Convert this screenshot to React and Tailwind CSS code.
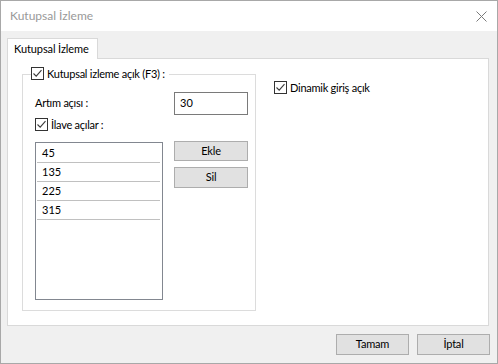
import React from "react";

const font = { fontFamily: '"Segoe UI", Lato, "Noto Sans", sans-serif' };

function Check({ label }) {
  return (
    <div className="flex items-center h-[13px]">
      <div className="w-[13px] h-[13px] border border-[#333333] bg-white flex items-center justify-center shrink-0">
        <svg width="11" height="11" viewBox="0 0 11 11">
          <path d="M1.5 5.5 L4.2 8.2 L9.5 2.2" fill="none" stroke="#3c3c3c" strokeWidth="1.1" />
        </svg>
      </div>
      <span className="ml-[3px] text-[11px] tracking-[-0.25px] leading-[13px] text-black whitespace-nowrap">{label}</span>
    </div>
  );
}

function Btn({ children, w = "w-[74px]", h = "h-[20px]" }) {
  return (
    <div className={`${w} ${h} bg-[#e1e1e1] border border-[#adadad] flex items-center justify-center text-[11px] tracking-[-0.2px] text-black`}>
      {children}
    </div>
  );
}

export default function App() {
  const rows = ["45", "135", "225", "315"];
  return (
    <div style={font} className="w-[498px] h-[364px] border border-[#a8a8a8] bg-[#f0f0f0] flex flex-col overflow-hidden">
      <div className="h-[30px] bg-white flex items-center justify-between pl-[9px] pr-[10px] shrink-0">
        <span className="text-[12px] text-[#999999] whitespace-nowrap">Kutupsal İzleme</span>
        <svg width="11" height="11" viewBox="0 0 11 11">
          <path d="M0.5 0.5 L10.5 10.5 M10.5 0.5 L0.5 10.5" stroke="#7a7a7a" strokeWidth="1" />
        </svg>
      </div>
      <div className="pl-[6px] pt-[7px] flex flex-col">
        <div className="relative z-10 -mb-px w-[91px] h-[21px] bg-white border border-b-0 border-[#d9d9d9] flex items-center pl-[6px] text-[11px] tracking-[-0.1px] text-black whitespace-nowrap">
          Kutupsal İzleme
        </div>
        <div className="w-[482px] h-[268px] bg-white border border-[#d9d9d9] flex">
          <div className="ml-[14px] mt-[15px] relative w-[234px] h-[237px] border border-[#dcdcdc] flex flex-col pl-[12px] pr-[7px]">
            <div className="absolute left-[8px] top-[-8px] bg-white pr-[4px]">
              <Check label="Kutupsal izleme açık (F3) :" />
            </div>
            <div className="mt-[17px] flex items-center justify-between">
              <span className="text-[11px] tracking-[-0.25px] text-black">Artım açısı :</span>
              <div className="w-[74px] h-[23px] border border-[#7a7a7a] flex items-center pl-[5px] text-[11px] text-black">30</div>
            </div>
            <div className="mt-[3px]">
              <Check label="İlave açılar :" />
            </div>
            <div className="mt-[11px] flex justify-between">
              <div className="w-[128px] h-[158px] border border-[#828790] pt-px flex flex-col">
                {rows.map((r) => (
                  <div key={r} className="h-[19px] ml-px mr-[2px] border-b border-[#c0c0c0] flex items-center pl-[5px] text-[11px] text-black">
                    {r}
                  </div>
                ))}
              </div>
              <div className="flex flex-col gap-[6px] -mt-px">
                <Btn>Ekle</Btn>
                <Btn h="h-[21px]">Sil</Btn>
              </div>
            </div>
          </div>
          <div className="ml-[18px] mt-[22px]">
            <Check label="Dinamik giriş açık" />
          </div>
        </div>
      </div>
      <div className="mt-[8px] pr-[7px] flex justify-end gap-[8px]">
        <Btn w="w-[73px]" h="h-[21px]">Tamam</Btn>
        <Btn w="w-[73px]" h="h-[21px]">İptal</Btn>
      </div>
    </div>
  );
}
